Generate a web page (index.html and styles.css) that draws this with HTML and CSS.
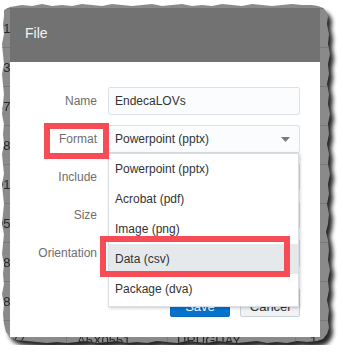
FILE: index.html
```html
<!DOCTYPE html>
<html>
<head>
<meta charset="utf-8">
<link rel="stylesheet" href="styles.css">
</head>
<body>
<div class="shot">
  <div class="frame">
    <div class="grid-bg">
      <div class="row"><span class="cell c1">-3120</span><span class="cell c2">A1X0032</span><span class="cell c3">CANADA</span><span class="cell c4">1</span></div>
      <div class="row"><span class="cell c1">0304</span><span class="cell c2">A1X0117</span><span class="cell c3">MEXICO</span><span class="cell c4">2</span></div>
      <div class="row"><span class="cell c1">5712</span><span class="cell c2">A2X0240</span><span class="cell c3">BRAZIL</span><span class="cell c4">1</span></div>
      <div class="row"><span class="cell c1">5868</span><span class="cell c2">A2X0388</span><span class="cell c3">CHILE</span><span class="cell c4">3</span></div>
      <div class="row"><span class="cell c1">-9140</span><span class="cell c2">A3X0412</span><span class="cell c3">PERU</span><span class="cell c4">1</span></div>
      <div class="row"><span class="cell c1">9521</span><span class="cell c2">A3X0475</span><span class="cell c3">ECUADOR</span><span class="cell c4">2</span></div>
      <div class="row"><span class="cell c1">E877</span><span class="cell c2">A4X0503</span><span class="cell c3">BOLIVIA</span><span class="cell c4">1</span></div>
      <div class="row"><span class="cell c1">5812</span><span class="cell c2">A4X0529</span><span class="cell c3">PARAGUAY</span><span class="cell c4">1</span></div>
      <div class="row"><span class="cell c1">-577</span><span class="cell c2">A5X0551</span><span class="cell c3">URUGUAY</span><span class="cell c4">1</span></div>
    </div>
    <div class="dialog">
      <div class="dlg-head">File</div>
      <div class="dlg-body">
        <div class="field"><span class="lbl">Name</span><div class="ctrl input">EndecaLOVs</div></div>
        <div class="field"><span class="lbl">Format</span><div class="ctrl select"><span>Powerpoint (pptx)</span><svg class="caret" width="9" height="5" viewBox="0 0 9 5"><path d="M0 0H9L4.5 5Z" fill="#7a7a7a"/></svg></div></div>
        <div class="field"><span class="lbl">Include</span><div class="ctrl select"></div></div>
        <div class="field"><span class="lbl">Size</span><div class="ctrl select"></div></div>
        <div class="field"><span class="lbl">Orientation</span><div class="ctrl select"></div></div>
        <div class="buttons"><button class="btn primary">Save</button><button class="btn">Cancel</button></div>
      </div>
      <ul class="menu">
        <li class="item">Powerpoint (pptx)</li>
        <li class="item">Acrobat (pdf)</li>
        <li class="item">Image (png)</li>
        <li class="item active">Data (csv)</li>
        <li class="item">Package (dva)</li>
      </ul>
      <div class="mark mark-format"></div>
      <div class="mark mark-data"></div>
    </div>
  </div>
</div>
</body>
</html>
```
FILE: styles.css
```css
* { box-sizing: border-box; }
body {
  margin: 0;
  background: #ffffff;
  font-family: "Liberation Sans", Arial, sans-serif;
}
.shot {
  padding: 4px 0 0 2px;
  width: 340px;
  filter: drop-shadow(4px 5px 2px rgba(0, 0, 0, 0.85));
}
.frame {
  display: grid;
  width: 329px;
  height: 341px;
  background: #8a8a8a;
  overflow: hidden;
  clip-path: polygon(
    2px 6px, 8px 3px, 14px 2px, 20px 1px, 30px 2px, 40px 0px, 50px 2px, 60px 1px, 70px 2px, 80px 0px,
    90px 1px, 100px 2px, 110px 0px, 120px 1px, 130px 2px, 140px 1px, 150px 0px, 160px 2px, 170px 1px,
    180px 0px, 190px 2px, 200px 1px, 210px 2px, 220px 0px, 230px 1px, 240px 2px, 250px 0px, 260px 1px,
    270px 2px, 280px 1px, 290px 0px, 300px 1px, 310px 1px, 316px 2px, 321px 4px, 324px 7px,
    326px 12px, 325px 20px, 327px 30px, 326px 40px, 328px 50px, 326px 60px, 327px 70px, 325px 80px,
    327px 90px, 326px 100px, 328px 110px, 326px 120px, 327px 130px, 325px 140px, 327px 150px,
    326px 160px, 328px 170px, 326px 180px, 327px 190px, 325px 200px, 327px 210px, 326px 220px,
    324px 228px, 326px 236px, 327px 246px, 326px 256px, 328px 266px, 326px 276px, 327px 286px,
    325px 296px, 327px 306px, 326px 316px, 327px 324px, 325px 330px, 321px 335px,
    315px 337px, 305px 338px, 295px 337px, 285px 339px, 275px 338px, 265px 339px, 255px 337px,
    245px 338px, 235px 339px, 225px 338px, 215px 337px, 205px 339px, 195px 338px, 185px 337px,
    175px 339px, 165px 338px, 155px 337px, 145px 339px, 135px 338px, 125px 339px, 115px 337px,
    105px 338px, 95px 339px, 85px 337px, 75px 338px, 65px 339px, 55px 338px, 45px 339px, 35px 338px,
    25px 337px, 15px 336px, 8px 333px, 4px 328px,
    2px 320px, 1px 310px, 2px 300px, 0px 290px, 2px 280px, 1px 270px, 2px 260px, 0px 250px,
    1px 240px, 2px 230px, 0px 220px, 1px 210px, 2px 200px, 1px 190px, 0px 180px, 2px 170px,
    1px 160px, 0px 150px, 2px 140px, 1px 130px, 2px 120px, 0px 110px, 1px 100px, 2px 90px,
    1px 80px, 0px 70px, 2px 60px, 1px 50px, 0px 40px, 2px 30px, 1px 20px, 2px 12px
  );
}
.grid-bg, .dialog { grid-area: 1 / 1; }

/* dimmed table behind the dialog */
.grid-bg {
  display: flex;
  flex-direction: column;
  padding-top: 4px;
}
.row {
  display: grid;
  grid-template-columns: 65px 101px 128px 1fr;
  flex: 0 0 39px;
  border-top: 1px solid #797979;
  font-size: 13px;
  color: #262626;
}
.cell {
  display: flex;
  align-items: center;
  border-right: 1px solid #797979;
  white-space: nowrap;
  overflow: hidden;
}
.c1 { justify-content: flex-end; padding-right: 41px; }
.c2 { padding-left: 10px; }
.c3 { padding-left: 9px; }
.c4 { padding-left: 14px; border-right: 0; }

/* dialog */
.dialog {
  position: relative;
  align-self: start;
  justify-self: start;
  margin: 4px 0 0 8px;
  width: 310px;
  height: 329px;
  background: #ffffff;
}
.dlg-head {
  height: 54px;
  background: #727272;
  color: #f4f4f4;
  font-size: 14px;
  display: flex;
  align-items: center;
  padding: 0 0 4px 15px;
}
.dlg-body {
  display: flex;
  flex-direction: column;
  gap: 10px;
  padding: 25px 20px 0 0;
}
.field {
  display: grid;
  grid-template-columns: 87px 192px;
  column-gap: 11px;
  align-items: center;
  height: 28px;
}
.lbl {
  text-align: right;
  font-size: 12px;
  color: #6e6e6e;
}
.ctrl {
  height: 28px;
  border: 1px solid #dbe1e6;
  border-radius: 2px;
  background: #fbfcfd;
  font-size: 12px;
  color: #333333;
  display: flex;
  align-items: center;
  padding: 0 9px 0 6px;
}
.select { justify-content: space-between; }
.caret { display: block; }
.buttons {
  display: flex;
  justify-content: flex-end;
  gap: 10px;
  margin-top: 11px;
}
.btn {
  width: 60px;
  height: 29px;
  border: 1px solid #c8d0d7;
  border-radius: 2px;
  background: #f0f2f4;
  color: #333333;
  font-family: inherit;
  font-size: 13px;
  padding: 7px 0 0;
}
.btn.primary {
  background: #0572ce;
  border-color: #0568bb;
  color: #ffffff;
}

/* open dropdown */
.menu {
  position: absolute;
  left: 98px;
  top: 145px;
  width: 191px;
  height: 154px;
  margin: 0;
  padding: 0;
  list-style: none;
  background: #ffffff;
  border: 1px solid #d9dee2;
  box-shadow: 1px 1px 3px rgba(0, 0, 0, 0.22);
}
.item {
  height: 30px;
  display: flex;
  align-items: center;
  padding-left: 6px;
  font-size: 12px;
  color: #333333;
}
.item.active { background: #e6e9ec; }

/* red annotation boxes */
.mark {
  position: absolute;
  border: 6px solid #f54c56;
}
.mark-format { left: 34px; top: 115px; width: 65px; height: 36px; }
.mark-data { left: 90px; top: 228px; width: 190px; height: 41px; }
```
